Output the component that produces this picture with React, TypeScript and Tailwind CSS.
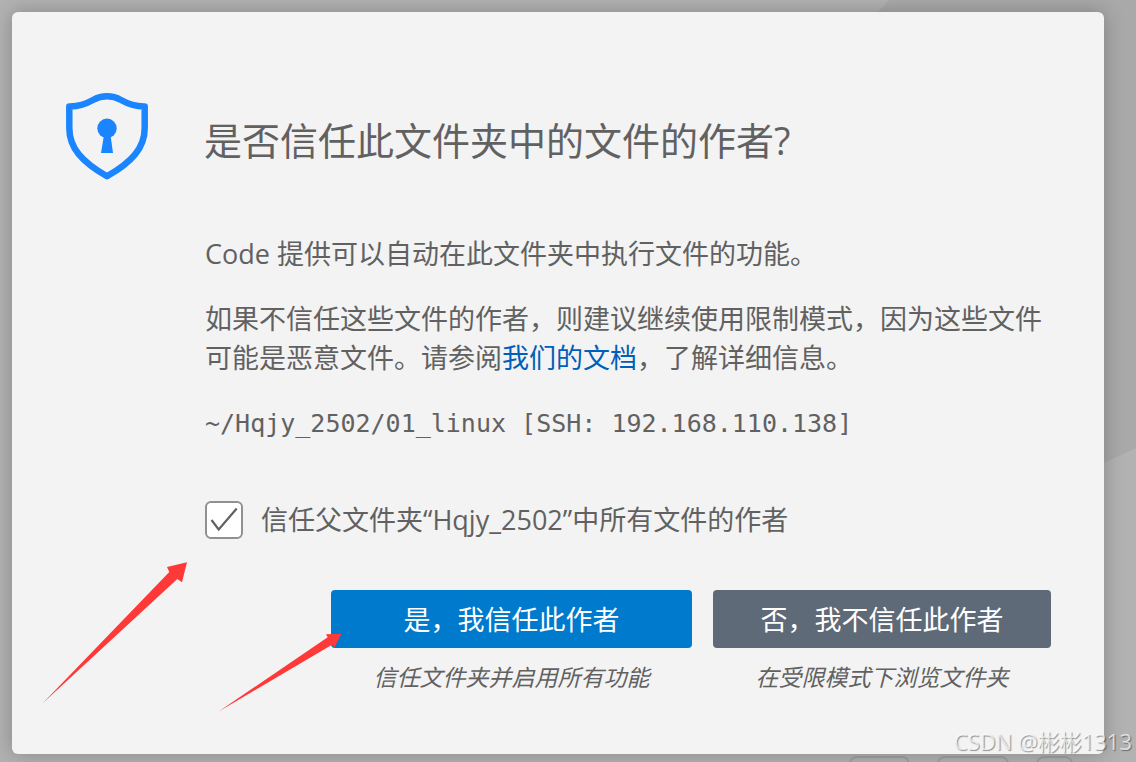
import React, { useState } from 'react';

interface ActionProps {
    label: string;
    hint: string;
    className: string;
}

const ShieldIcon: React.FC = () => (
    <svg viewBox="0 0 82 87" className="w-[82px] h-[87px] shrink-0" fill="none" aria-hidden="true">
        <path
            d="M3.3 13.4C14 13.6 20 11 27 7C32 4.2 36 3.3 41 3.3C46 3.3 50 4.2 55 7C62 11 68 13.6 78.7 13.4V35C78.7 55 66 69 41 83.3C16 69 3.3 55 3.3 35Z"
            stroke="#1a85ff"
            strokeWidth={6.5}
            strokeLinejoin="round"
        />
        <circle cx={41} cy={35.3} r={9.7} fill="#1a85ff" />
        <path d="M38 42H44.5L47 60H35Z" fill="#1a85ff" />
    </svg>
);

const Action: React.FC<ActionProps> = ({ label, hint, className }) => (
    <div className="flex flex-col gap-[14px]">
        <button className={`h-[58px] w-full rounded-[4px] text-white text-[27px] leading-[39px] ${className}`}>{label}</button>
        <p className="text-center italic text-[23px] leading-[30px]">{hint}</p>
    </div>
);

const Backdrop: React.FC = () => (
    <div className="absolute inset-0 overflow-hidden bg-[#b2b2b2]">
        <svg className="absolute right-0 top-0 w-[260px] h-[466px]" viewBox="0 0 260 466" aria-hidden="true">
            <path d="M13 0H260V448L226 464L0 14Z" fill="#a9a9a9" />
        </svg>
        <div className="absolute right-[63px] top-[756px] flex gap-[27px]">
            <span className="w-[61px] h-8 rounded-lg border-2 border-[#a0a0a0]" />
            <span className="w-[72px] h-8 rounded-lg border-2 border-[#a0a0a0]" />
            <span className="w-[37px] h-8 rounded-lg border-2 border-[#a0a0a0]" />
        </div>
    </div>
);

const Arrows: React.FC = () => (
    <>
        <svg className="absolute left-[30px] top-[550px] w-[146px] h-[142px] pointer-events-none" viewBox="0 0 146 142" fill="#ff3838" aria-hidden="true">
            <path d="M0.7 141.3L127.3 10L125 5L145 0.3L140 20.3L135.3 17Z" />
        </svg>
        <svg className="absolute left-[206px] top-[621px] w-[124px] h-[79px] pointer-events-none" viewBox="0 0 124 79" fill="#ff3838" aria-hidden="true">
            <path d="M0.3 78.7L109.7 4.3L108 1.3L123.3 0.7L116.7 14.3L114 11.7Z" />
        </svg>
    </>
);

const App: React.FC = () => {
    const [trustParent, setTrustParent] = useState(true);

    return (
        <div className="relative min-h-screen overflow-hidden flex flex-col pl-3 pt-3 pr-8 pb-2 text-[#616161] font-['Open_Sans','Noto_Sans_CJK_SC',sans-serif]">
            <Backdrop />

            <main className="relative flex-1 rounded-[6px] bg-[#f3f3f3] shadow-[0_0_20px_rgba(0,0,0,0.25)] pl-[54px] pr-[53px] pt-[81px] pb-[60px]">
                <header className="flex items-start gap-[56px]">
                    <ShieldIcon />
                    <h1 className="text-[38px] leading-[94px] font-normal">是否信任此文件夹中的文件的作者?</h1>
                </header>

                <div className="mt-[47px] pl-[139px] text-[27px] leading-[39px]">
                    <p>Code 提供可以自动在此文件夹中执行文件的功能。</p>
                    <p className="mt-[26px]">
                        如果不信任这些文件的作者，则建议继续使用限制模式，因为这些文件可能是恶意文件。请参阅<a href="#docs" className="text-[#005fb8]">我们的文档</a>，了解详细信息。
                    </p>
                    <p className="mt-[27px] text-[25px] font-['DejaVu_Sans_Mono',monospace]">~/Hqjy_2502/01_linux [SSH: 192.168.110.138]</p>

                    <div className="mt-[57px] flex items-center gap-[18px]">
                        <span className="relative size-[38px] shrink-0">
                            <input
                                id="trust-parent"
                                type="checkbox"
                                checked={trustParent}
                                onChange={e => setTrustParent(e.target.checked)}
                                className="block appearance-none size-[38px] rounded-[6px] border-2 border-[#919191] bg-white"
                            />
                            {trustParent && (
                                <svg className="absolute inset-0 pointer-events-none" viewBox="0 0 38 38" fill="none" stroke="#616161" strokeWidth={2.2} aria-hidden="true">
                                    <path d="M6.5 19L13.7 28.5L31.7 7.5" />
                                </svg>
                            )}
                        </span>
                        <label htmlFor="trust-parent">信任父文件夹“Hqjy_2502”中所有文件的作者</label>
                    </div>

                    <div className="mt-[51px] pl-[126px] grid grid-cols-[361fr_338fr] gap-[21px]">
                        <Action label="是，我信任此作者" hint="信任文件夹并启用所有功能" className="bg-[#007acc]" />
                        <Action label="否，我不信任此作者" hint="在受限模式下浏览文件夹" className="bg-[#5f6a79]" />
                    </div>
                </div>

                <Arrows />
            </main>

            <div className="absolute right-1 bottom-[6px] text-[22px] leading-[30px] text-white/70 [text-shadow:1px_1px_1px_rgba(0,0,0,0.4)]">CSDN @彬彬1313</div>
        </div>
    );
};

export default App;
